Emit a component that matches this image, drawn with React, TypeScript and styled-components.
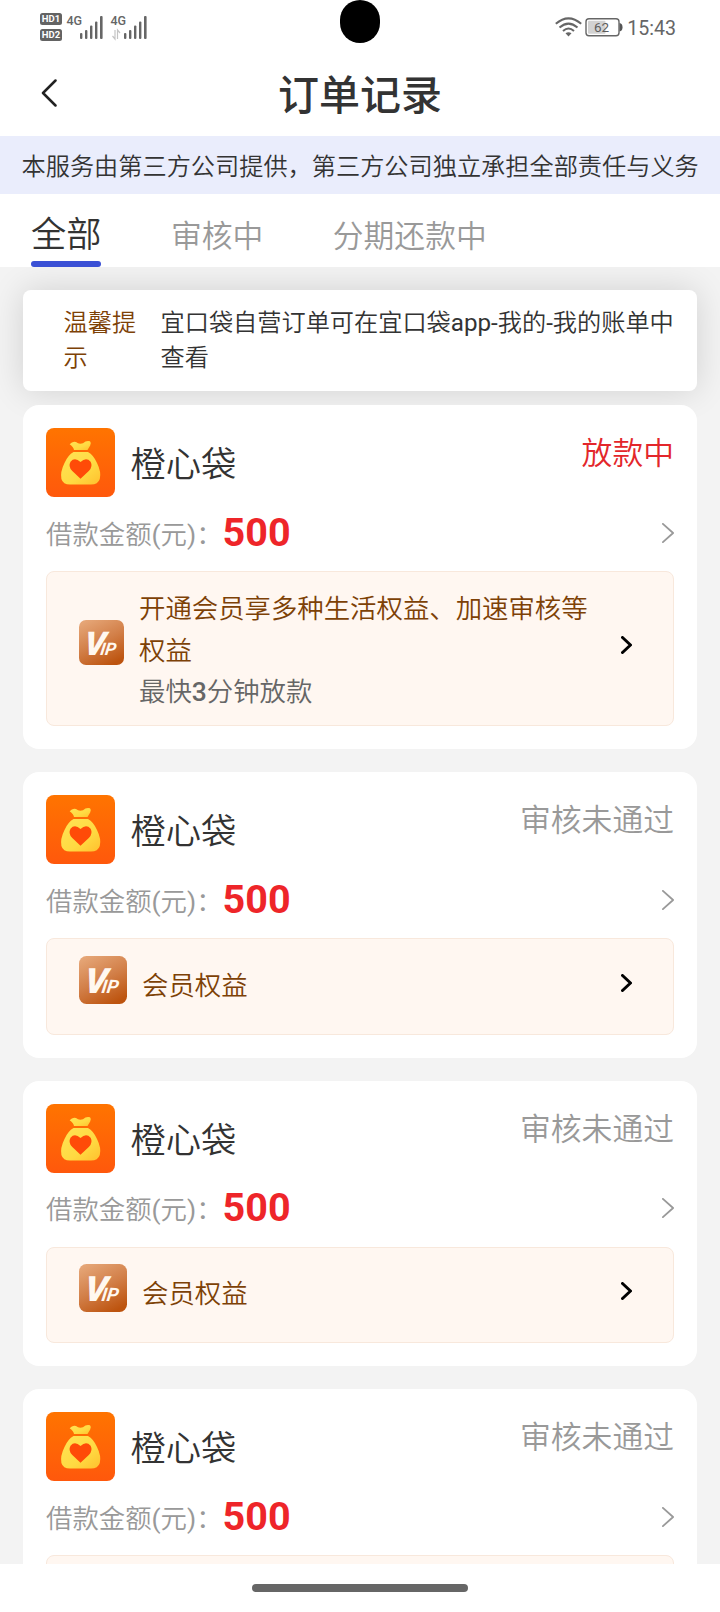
import React from 'react';
import styled, { createGlobalStyle } from 'styled-components';

const GlobalStyle = createGlobalStyle`
  * { box-sizing: border-box; }
  html, body { margin: 0; padding: 0; background: #fff; }
  body { font-family: Roboto, 'Noto Sans CJK SC', sans-serif; font-weight: 350; color: #333; overflow: hidden; }
  svg { display: block; flex: none; }
`;

const Screen = styled.div`
  width: 720px;
  height: 1612px;
  display: flex;
  flex-direction: column;
  overflow: hidden;
  position: relative;
  background: #fff;
`;

const Latin = styled.span`
  font-weight: 400;
`;

const StatusBar = styled.div`
  flex: none;
  height: 54px;
  display: flex;
  justify-content: space-between;
  align-items: center;
  padding: 0 44px 0 40px;
  color: #666;
`;

const StatusGroup = styled.div<{ $gap?: number }>`
  display: flex;
  align-items: center;
  gap: ${(p) => p.$gap ?? 0}px;
`;

const BadgeStack = styled.div`
  display: flex;
  flex-direction: column;
  gap: 4px;
  margin-right: 4px;
`;

const HdBadge = styled.span`
  width: 22px;
  height: 12px;
  border-radius: 2.5px;
  background: #636363;
  color: #fff;
  font-size: 9.5px;
  font-weight: 700;
  line-height: 12.5px;
  text-align: center;
`;

const Clock = styled.span`
  margin-left: 1px;
  font-size: 19.6px;
  font-weight: 400;
  line-height: 28px;
  padding-top: 3px;
`;

const Camera = styled.div`
  position: absolute;
  left: 340px;
  top: 0;
  width: 40px;
  height: 43px;
  border-radius: 20px;
  background: #000;
`;

const Header = styled.header`
  flex: none;
  height: 82px;
  display: grid;
  grid-template-columns: 100px 1fr 100px;
  align-items: center;
`;

const BackButton = styled.div`
  padding: 0 0 5px 41px;
`;

const Title = styled.h1`
  margin: 0;
  text-align: center;
  font-size: 41px;
  font-weight: 500;
  line-height: 60px;
  padding-top: 2px;
`;

const Disclaimer = styled.div`
  flex: none;
  height: 58px;
  padding: 2px 0 0 21.5px;
  background: #eaedfc;
  font-size: 24.2px;
  line-height: 58px;
  white-space: nowrap;
`;

const Tabs = styled.nav`
  flex: none;
  height: 73px;
  display: flex;
  align-items: flex-end;
  gap: 69.5px;
  padding-left: 31px;
`;

const Tab = styled.div<{ $active?: boolean }>`
  height: 73px;
  font-size: ${(p) => (p.$active ? '35.2px' : '30.8px')};
  line-height: ${(p) => (p.$active ? '68px' : '69px')};
  padding-top: ${(p) => (p.$active ? '7px' : '8px')};
  color: ${(p) => (p.$active ? '#333' : '#999')};
  display: flex;
  flex-direction: column;
  white-space: nowrap;
`;

const TabLabel = styled.span`
  height: 60px;
`;

const Underline = styled.span`
  height: 6px;
  border-radius: 3px;
  background: #3a50d5;
`;

const List = styled.main`
  flex: 1;
  min-height: 0;
  overflow: hidden;
  background: #f3f3f3;
  padding: 23px 23px 0;
`;

const Tip = styled.section`
  height: 101px;
  border-radius: 8px;
  background: #fff;
  box-shadow: 0 0 34px rgba(0, 0, 0, 0.14);
  display: flex;
  padding: 16px 20px 0 40.5px;
  font-size: 24.2px;
  line-height: 35px;
`;

const TipLabel = styled.div`
  width: 73px;
  margin-right: 24px;
  color: #7d4106;
  flex: none;
`;

const TipText = styled.div`
  flex: 1;
`;

const Card = styled.article<{ $first?: boolean }>`
  position: relative;
  margin-top: ${(p) => (p.$first ? '14px' : '23px')};
  padding: 23px;
  border-radius: 16px;
  background: #fff;
`;

const CardTop = styled.div`
  display: flex;
  height: 69px;
`;

const Name = styled.div`
  margin-left: 15.5px;
  flex: 1;
  font-size: 35.3px;
  line-height: 69px;
  padding-top: 3px;
`;

const Status = styled.div<{ $tone: string }>`
  font-size: 30.8px;
  line-height: 51px;
  color: ${(p) => p.$tone};
`;

const AmountRow = styled.div`
  display: flex;
  align-items: center;
  height: 73.8px;
  padding-bottom: 2.4px;
`;

const AmountLabel = styled.span`
  font-size: 26.4px;
  line-height: 40px;
  color: #999;
  padding-top: 4px;
`;

const Amount = styled.span`
  flex: 1;
  font-size: 39.5px;
  line-height: 46px;
  font-weight: 700;
  color: #ee2529;
`;

const Benefit = styled.div<{ $tall?: boolean }>`
  height: ${(p) => (p.$tall ? '155.7px' : '96.5px')};
  border: 1px solid #f8e8dc;
  border-radius: 8px;
  background: #fff7f1;
  display: flex;
  align-items: center;
  padding: 0 41px 0 32px;
`;

const BenefitIcon = styled.div`
  margin-right: 15px;
  padding-bottom: 13px;
`;

const BenefitText = styled.div<{ $tall?: boolean }>`
  flex: 1;
  padding: ${(p) => (p.$tall ? '6px 24px 0 0' : '0')};
  font-size: 26.4px;
  line-height: 41.5px;
  color: #7d4106;
`;

const BenefitNote = styled.div`
  color: #666;
  b { font-weight: 500; }
`;

const BenefitArrow = styled.div`
  padding-bottom: 7px;
`;

const HomeBar = styled.footer`
  flex: none;
  height: 48px;
  display: flex;
  justify-content: center;
  padding-top: 20px;
`;

const HomePill = styled.div`
  width: 216px;
  height: 8px;
  border-radius: 4px;
  background: #666;
`;

function Signal({ data }: { data?: boolean }) {
  return (
    <svg width="44" height="30" viewBox="0 0 44 30" fill="#666">
      <text x="0.5" y="13" fontSize="12.5" fontWeight="500" fontFamily="Roboto, sans-serif">4G</text>
      {data && (
        <g fill="none" stroke="#c4c4c4" strokeWidth="1.2">
          <path d="M5 18v9l-2.5-3" />
          <path d="M7.5 27v-9l2.5 3" />
        </g>
      )}
      <rect x="14" y="21" width="2.4" height="6" rx="1" />
      <rect x="19" y="18" width="2.4" height="9" rx="1" />
      <rect x="24" y="13.5" width="2.4" height="13.5" rx="1" />
      <rect x="29" y="9.5" width="2.4" height="17.5" rx="1" />
      <rect x="34" y="4" width="2.6" height="23" rx="1" />
    </svg>
  );
}

function Wifi() {
  return (
    <svg width="27" height="20" viewBox="0 0 27 20" fill="none" stroke="#666" strokeWidth="2">
      <path d="M0.8 6.8Q13.5 -4 26.2 6.8" />
      <path d="M4.5 10.6Q13.5 2.6 22.5 10.6" />
      <path d="M8 14Q13.5 9 19 14" />
      <path d="M10.5 16.3Q13.5 14 16.5 16.3L13.5 19.5z" fill="#666" stroke="none" />
    </svg>
  );
}

function Battery() {
  return (
    <svg width="38" height="20" viewBox="0 0 38 20">
      <rect x="1" y="1.7" width="33" height="17" rx="3" fill="#fff" stroke="#666" strokeWidth="1.4" />
      <rect x="3" y="3.7" width="17.5" height="13" rx="1" fill="#d2d2d2" />
      <path d="M34.5 6q3 .4 3 4.2t-3 4.2z" fill="#555" />
      <text x="16.5" y="15" fontSize="13.5" textAnchor="middle" fill="#5c5c5c" fontWeight="400" fontFamily="Roboto, sans-serif">62</text>
    </svg>
  );
}

function BagLogo() {
  return (
    <svg width="69" height="69" viewBox="0 0 69 69">
      <defs>
        <linearGradient id="bagBg" x1="0" y1="0" x2="0" y2="1">
          <stop offset="0" stopColor="#ff7400" />
          <stop offset="1" stopColor="#ff580c" />
        </linearGradient>
        <linearGradient id="bagFill" x1="0" y1="0" x2="1" y2="1">
          <stop offset="0" stopColor="#ffe455" />
          <stop offset="0.6" stopColor="#ffda42" />
          <stop offset="1" stopColor="#ffc02e" />
        </linearGradient>
      </defs>
      <rect width="69" height="69" rx="8" fill="url(#bagBg)" />
      <path d="M23.7 16.2Q26.5 12.8 30 14Q33 16.6 37 15.2Q40 12.4 44 13.3Q45.8 15.2 44.2 17.6L41.5 22H28Q27.8 19.4 23.7 16.2Z" fill="url(#bagFill)" />
      <path d="M27.5 24H42Q47.5 27 51 35Q55.5 44 53.8 51Q52 56.5 45 56.5H24Q17 56.5 15.4 51Q14 44 18.5 35Q22 27 27.5 24Z" fill="url(#bagFill)" />
      <path d="M34.5 50.7L26.3 43Q21.8 38.5 24.5 33.7Q28.8 28.8 34.5 34Q40.2 28.8 44.6 33.7Q47.2 38.5 42.8 43Z" fill="#ff4b08" />
    </svg>
  );
}

function VipIcon({ size }: { size: number }) {
  return (
    <svg width={size} height={size} viewBox="0 0 48 48">
      <defs>
        <linearGradient id="vipBg" x1="0.2" y1="0" x2="0.7" y2="1">
          <stop offset="0" stopColor="#e5a576" />
          <stop offset="0.5" stopColor="#d27f48" />
          <stop offset="1" stopColor="#bd540f" />
        </linearGradient>
      </defs>
      <rect width="48" height="48" rx="7.5" fill="url(#vipBg)" />
      <text
        transform="translate(4.2 37) skewX(-8)"
        fill="#fff8f0"
        fontFamily="Roboto, sans-serif"
        fontWeight="900"
        fontStyle="italic"
        fontSize="35"
      >
        V<tspan dx="-4.6" fontSize="18.5" fontWeight="700">IP</tspan>
      </text>
    </svg>
  );
}

function Chevron({ width, height, stroke, color }: { width: number; height: number; stroke: number; color: string }) {
  const s = stroke / 2;
  return (
    <svg width={width} height={height} fill="none" stroke={color} strokeWidth={stroke} strokeLinecap="round" strokeLinejoin="round">
      <path d={`M${s} ${s}L${width - s} ${height / 2}L${s} ${height - s}`} />
    </svg>
  );
}

interface Order {
  status: string;
  tone: string;
  amount: number;
  promo?: boolean;
}

const orders: Order[] = [
  { status: '放款中', tone: '#e3262b', amount: 500, promo: true },
  { status: '审核未通过', tone: '#999', amount: 500 },
  { status: '审核未通过', tone: '#999', amount: 500 },
  { status: '审核未通过', tone: '#999', amount: 500 },
];

function OrderCard({ order, first }: { order: Order; first: boolean }) {
  return (
    <Card $first={first}>
      <CardTop>
        <BagLogo />
        <Name>橙心袋</Name>
        <Status $tone={order.tone}>{order.status}</Status>
      </CardTop>
      <AmountRow>
        <AmountLabel>借款金额<Latin>(</Latin>元<Latin>)</Latin>：</AmountLabel>
        <Amount>{order.amount}</Amount>
        <Chevron width={12} height={20} stroke={1.8} color="#999" />
      </AmountRow>
      <Benefit $tall={order.promo}>
        <BenefitIcon><VipIcon size={order.promo ? 45 : 48} /></BenefitIcon>
        <BenefitText $tall={order.promo}>
          {order.promo ? '开通会员享多种生活权益、加速审核等权益' : '会员权益'}
          {order.promo && <BenefitNote>最快<b>3</b>分钟放款</BenefitNote>}
        </BenefitText>
        <BenefitArrow><Chevron width={11} height={18} stroke={3} color="#000" /></BenefitArrow>
      </Benefit>
    </Card>
  );
}

export default function App() {
  return (
    <Screen>
      <GlobalStyle />
      <StatusBar>
        <StatusGroup>
          <BadgeStack>
            <HdBadge>HD1</HdBadge>
            <HdBadge>HD2</HdBadge>
          </BadgeStack>
          <Signal />
          <Signal data />
        </StatusGroup>
        <StatusGroup $gap={3}>
          <Wifi />
          <Battery />
          <Clock>15:43</Clock>
        </StatusGroup>
      </StatusBar>
      <Camera />
      <Header>
        <BackButton>
          <svg width="16" height="28" fill="none" stroke="#222" strokeWidth="2.5" strokeLinecap="round" strokeLinejoin="round">
            <path d="M14.5 1.5L2 14L14.5 26.5" />
          </svg>
        </BackButton>
        <Title>订单记录</Title>
      </Header>
      <Disclaimer>本服务由第三方公司提供，第三方公司独立承担全部责任与义务</Disclaimer>
      <Tabs>
        <Tab $active>
          <TabLabel>全部</TabLabel>
          <Underline />
        </Tab>
        <Tab><TabLabel>审核中</TabLabel></Tab>
        <Tab><TabLabel>分期还款中</TabLabel></Tab>
      </Tabs>
      <List>
        <Tip>
          <TipLabel>温馨提示</TipLabel>
          <TipText>宜口袋自营订单可在宜口袋<Latin>app-</Latin>我的<Latin>-</Latin>我的账单中查看</TipText>
        </Tip>
        {orders.map((order, i) => (
          <OrderCard key={i} order={order} first={i === 0} />
        ))}
      </List>
      <HomeBar>
        <HomePill />
      </HomeBar>
    </Screen>
  );
}
